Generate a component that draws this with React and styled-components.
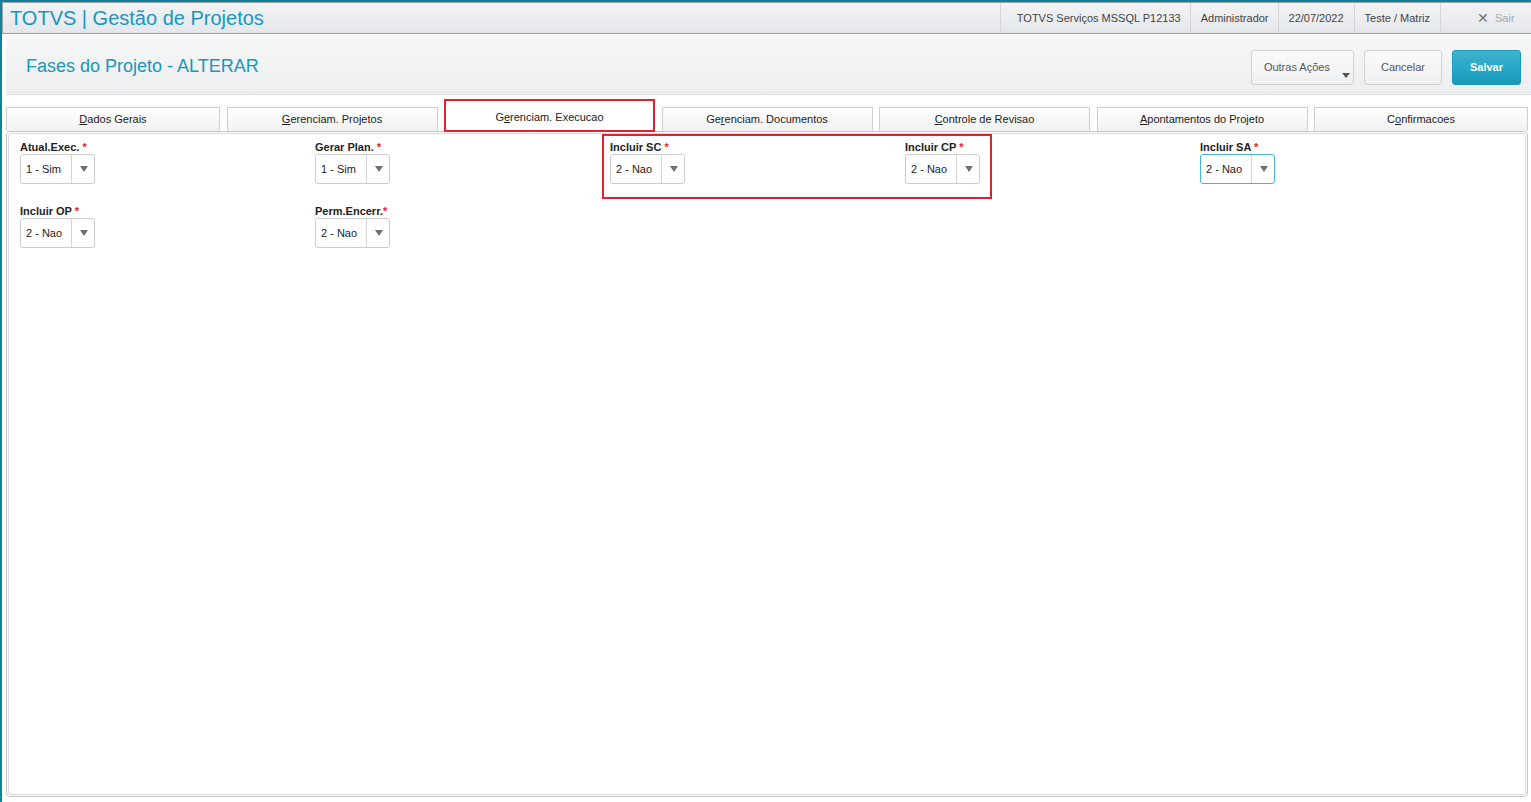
import React from "react";
import styled, { createGlobalStyle, css } from "styled-components";

const GlobalStyle = createGlobalStyle`
  html, body {
    margin: 0;
    padding: 0;
    background: #ffffff;
  }
  body {
    font-family: "Liberation Sans", Arial, sans-serif;
    font-size: 11px;
    color: #333;
  }
  * { box-sizing: border-box; }
`;

const TEAL = "#15809a";
const BRAND = "#1797bf";
const RED = "#e3202b";

const Frame = styled.div`
  height: 802px;
  border-top: 2px solid ${TEAL};
  border-left: 2px solid ${TEAL};
  background: #fff;
  overflow: hidden;
`;

const TopBar = styled.header`
  height: 32px;
  display: flex;
  align-items: stretch;
  justify-content: space-between;
  border: 1px solid #a3a3a3;
  border-right: none;
  border-bottom-color: #9a9a9a;
  background: linear-gradient(#f2f3f5, #e4e7ea);
`;

const AppTitle = styled.div`
  display: flex;
  align-items: center;
  padding-left: 7px;
  font-size: 20px;
  color: ${BRAND};
  white-space: nowrap;
`;

const TopInfo = styled.div`
  display: flex;
  align-items: stretch;
`;

const InfoItem = styled.div`
  display: flex;
  align-items: center;
  padding: 0 ${(p) => p.$right || 10}px 0 ${(p) => p.$left || 10}px;
  border-left: 1px solid #d2d4d6;
  color: #444;
  font-size: 11px;
  white-space: nowrap;
`;

const ExitItem = styled.div`
  display: flex;
  align-items: center;
  gap: 6px;
  width: 91px;
  padding-left: 36px;
  border-left: 1px solid #d2d4d6;
  color: #a2a6ab;
  font-size: 11px;
`;

const ExitMark = styled.span`
  color: #6f7378;
  font-size: 14px;
  line-height: 1;
`;

const Body = styled.div`
  padding: 1px 0 0 4px;
`;

const PageHead = styled.div`
  height: 60px;
  display: flex;
  align-items: flex-start;
  justify-content: space-between;
  padding: 15px 10px 0 20px;
  background: linear-gradient(#f6f7f7, #eceeef);
  border-bottom: 1px solid #dcdedf;
`;

const PageTitle = styled.h1`
  margin: 1px 0 0;
  line-height: 30px;
  font-size: 18px;
  font-weight: normal;
  color: ${BRAND};
`;

const Actions = styled.div`
  display: flex;
  gap: 10px;
`;

const Button = styled.button`
  position: relative;
  height: 35px;
  padding: ${(p) => p.$pad || "0 16px"};
  padding-bottom: 2px;
  border: 1px solid #d0d2d4;
  border-radius: 3px;
  background: linear-gradient(#fbfbfb, #eeeff0);
  color: #555;
  font-family: inherit;
  font-size: 11px;
  cursor: pointer;
  ${(p) =>
    p.$primary &&
    css`
      border-color: #1a9bbd;
      background: linear-gradient(#3db3d0, #169abd);
      color: #fff;
      font-weight: bold;
    `}
`;

const Caret = styled.span`
  position: absolute;
  right: 3px;
  bottom: 6px;
  width: 0;
  height: 0;
  border-left: 4px solid transparent;
  border-right: 4px solid transparent;
  border-top: 5px solid #555;
`;

const TabBar = styled.nav`
  display: flex;
  align-items: flex-end;
  gap: 6.5px;
  height: 24px;
  margin: 12px 3px 0 0;
`;

const Tab = styled.div`
  flex: ${(p) => (p.$edge ? "0 0 214px" : "1 1 0")};
  height: 24px;
  display: flex;
  align-items: center;
  justify-content: center;
  padding-bottom: 1px;
  border: 1px solid #cfcfcf;
  border-bottom: none;
  background: linear-gradient(#ffffff, #f1f1f1);
  color: #222;
  font-size: 11px;
  white-space: nowrap;
  ${(p) =>
    p.$active &&
    css`
      position: relative;
      z-index: 1;
      height: 33px;
      margin-bottom: -1px;
      padding-bottom: 0;
      padding-top: 1px;
      background: #fff;
      border-color: #fff;
      outline: 2px solid ${RED};
      outline-offset: -2px;
    `}
`;

const Key = styled.span`
  text-decoration: underline;
`;

const Panel = styled.section`
  height: 666px;
  margin-right: 3px;
  padding: 1px;
  border: 1px solid #c4c4c4;
  border-radius: 4px;
`;

const PanelInner = styled.div`
  height: 100%;
  border: 1px solid #dadada;
  border-radius: 3px;
  padding: 7px 0 0 11px;
`;

const FieldGrid = styled.div`
  display: grid;
  grid-template-columns: repeat(5, 295px);
  row-gap: 21px;
`;

const Field = styled.div`
  position: relative;
  ${(p) =>
    p.$marked &&
    css`
      &::after {
        content: "";
        position: absolute;
        left: -8px;
        top: -7px;
        width: ${p.$marked}px;
        height: 61px;
        border: 2px solid ${RED};
        pointer-events: none;
      }
    `}
`;

const Label = styled.label`
  display: block;
  height: 13px;
  line-height: 13px;
  font-size: 11px;
  font-weight: bold;
  color: #222;
`;

const Req = styled.span`
  color: ${RED};
  font-weight: bold;
`;

const SelectBox = styled.div`
  display: flex;
  width: 75px;
  height: 30px;
  border: 1px solid ${(p) => (p.$focused ? "#47b3d0" : "#cdcdcd")};
  border-radius: 3px;
  background: #fff;
`;

const SelectValue = styled.div`
  width: 51px;
  display: flex;
  align-items: center;
  padding-left: 5px;
  border-right: 1px solid #d6d6d6;
  color: #222;
  font-size: 11px;
  white-space: nowrap;
`;

const SelectArrow = styled.div`
  flex: 1;
  display: flex;
  align-items: center;
  justify-content: center;
  padding-left: 1px;
  &::before {
    content: "";
    width: 0;
    height: 0;
    border-left: 4px solid transparent;
    border-right: 4px solid transparent;
    border-top: 6px solid #6d7177;
  }
`;

const tabs = [
  { pre: "", key: "D", post: "ados Gerais", edge: true },
  { pre: "", key: "G", post: "erenciam. Projetos" },
  { pre: "G", key: "e", post: "renciam. Execucao", active: true },
  { pre: "Ge", key: "r", post: "enciam. Documentos" },
  { pre: "", key: "C", post: "ontrole de Revisao" },
  { pre: "", key: "A", post: "pontamentos do Projeto" },
  { pre: "C", key: "o", post: "nfirmacoes", edge: true },
];

const fields = [
  { label: "Atual.Exec.", value: "1 - Sim" },
  { label: "Gerar Plan.", value: "1 - Sim" },
  { label: "Incluir SC", value: "2 - Nao", marked: 386 },
  { label: "Incluir CP", value: "2 - Nao" },
  { label: "Incluir SA", value: "2 - Nao", focused: true },
  { label: "Incluir OP", value: "2 - Nao" },
  { label: "Perm.Encerr.", value: "2 - Nao", tight: true },
];

function Select({ value, focused }) {
  return (
    <SelectBox $focused={focused}>
      <SelectValue>{value}</SelectValue>
      <SelectArrow />
    </SelectBox>
  );
}

export default function App() {
  return (
    <>
      <GlobalStyle />
      <Frame>
        <TopBar>
          <AppTitle>TOTVS | Gestão de Projetos</AppTitle>
          <TopInfo>
            <InfoItem $left={16} $right={9}>TOTVS Serviços MSSQL P12133</InfoItem>
            <InfoItem $right={9}>Administrador</InfoItem>
            <InfoItem $right={10}>22/07/2022</InfoItem>
            <InfoItem>Teste / Matriz</InfoItem>
            <ExitItem>
              <ExitMark>✕</ExitMark>
              Sair
            </ExitItem>
          </TopInfo>
        </TopBar>
        <Body>
          <PageHead>
            <PageTitle>Fases do Projeto - ALTERAR</PageTitle>
            <Actions>
              <Button $pad="0 23px 0 12px">
                Outras Ações
                <Caret />
              </Button>
              <Button $pad="0 16px">Cancelar</Button>
              <Button $primary $pad="0 17px">Salvar</Button>
            </Actions>
          </PageHead>
          <TabBar>
            {tabs.map((t) => (
              <Tab key={t.pre + t.key + t.post} $active={t.active} $edge={t.edge}>
                {t.pre}
                <Key>{t.key}</Key>
                {t.post}
              </Tab>
            ))}
          </TabBar>
          <Panel>
            <PanelInner>
              <FieldGrid>
                {fields.map((f) => (
                  <Field key={f.label} $marked={f.marked}>
                    <Label>
                      {f.label}
                      {f.tight ? "" : " "}
                      <Req>*</Req>
                    </Label>
                    <Select value={f.value} focused={f.focused} />
                  </Field>
                ))}
              </FieldGrid>
            </PanelInner>
          </Panel>
        </Body>
      </Frame>
    </>
  );
}
